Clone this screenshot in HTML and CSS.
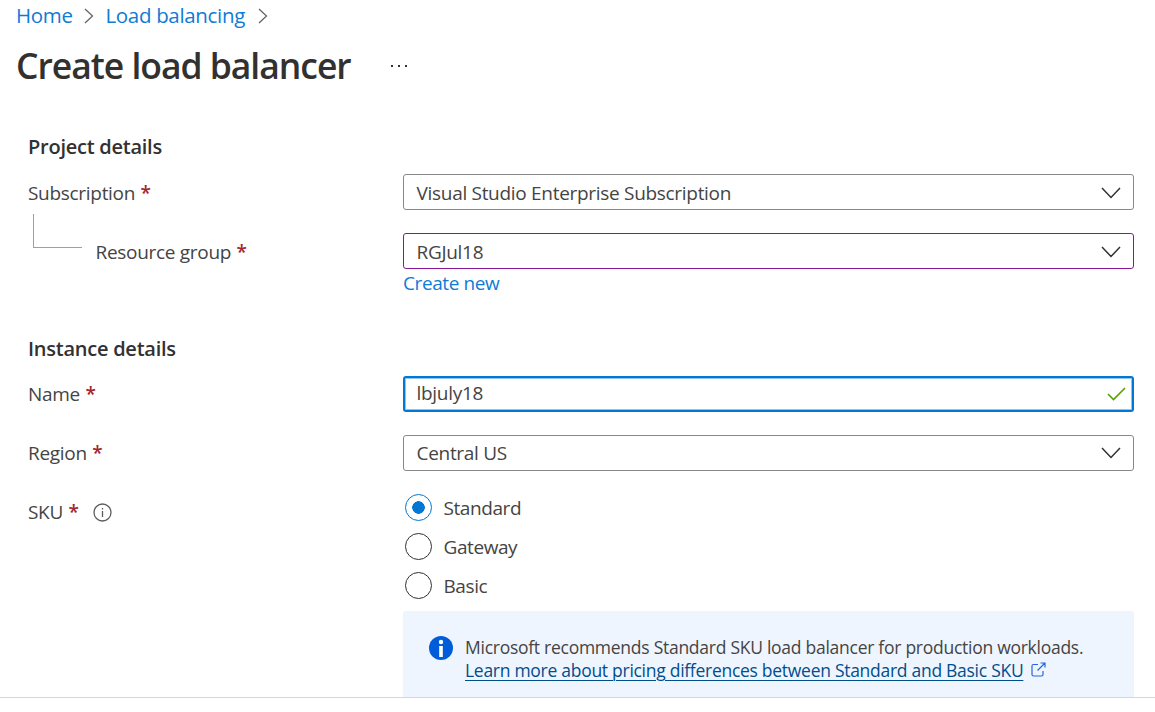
FILE: index.html
```html
<!DOCTYPE html>
<html lang="en">
<head>
<meta charset="utf-8">
<title>Create load balancer</title>
<link rel="stylesheet" href="styles.css">
</head>
<body>
<div class="blade">
  <nav class="breadcrumb">
    <a class="crumb crumb-home" href="#">Home</a>
    <svg class="crumb-sep" width="10" height="16" viewBox="0 0 10 16"><path d="M1 1l7.500 7-7.500 7"/></svg>
    <a class="crumb crumb-parent" href="#">Load balancing</a>
    <svg class="crumb-sep" width="10" height="16" viewBox="0 0 10 16"><path d="M1 1l7.500 7-7.500 7"/></svg>
  </nav>
  <header class="title-bar">
    <h1 class="title">Create load balancer</h1>
    <svg class="more" width="18" height="4" viewBox="0 0 18 4"><path d="M1 1h2v2H1zM8 1h2v2H8zM15 1h2v2h-2z"/></svg>
  </header>
  <main class="form">
    <h2 class="section-title">Project details</h2>
    <div class="row">
      <label class="label"><span>Subscription</span><span class="req">*</span></label>
      <div class="field"><span>Visual Studio Enterprise Subscription</span><svg class="chevron" width="20" height="12" viewBox="0 0 20 12"><path d="M1 1l9 9.500 9-9.500"/></svg></div>
    </div>
    <div class="row">
      <div class="label label-child"><span class="branch"></span><span>Resource group</span><span class="req">*</span></div>
      <div class="field field-edited"><span>RGJul18</span><svg class="chevron" width="20" height="12" viewBox="0 0 20 12"><path d="M1 1l9 9.500 9-9.500"/></svg></div>
    </div>
    <div class="link-row"><a class="link" href="#">Create new</a></div>
    <h2 class="section-title">Instance details</h2>
    <div class="row row-instance">
      <label class="label"><span>Name</span><span class="req">*</span></label>
      <div class="field field-focus"><span>lbjuly18</span><svg class="check" width="19" height="14" viewBox="0 0 19 14"><path d="M1 7l5.500 5.500L18 1"/></svg></div>
    </div>
    <div class="row row-instance">
      <label class="label"><span>Region</span><span class="req">*</span></label>
      <div class="field field-region"><span>Central US</span><svg class="chevron" width="20" height="12" viewBox="0 0 20 12"><path d="M1 1l9 9.500 9-9.500"/></svg></div>
    </div>
    <div class="row row-instance sku-row">
      <div class="label"><span>SKU</span><span class="req">*</span>
        <svg class="info" width="19" height="19" viewBox="0 0 19 19"><circle cx="9.500" cy="9.500" r="8.500"/><path d="M9.500 8v6M9.500 5v1.500"/></svg>
      </div>
      <div class="radios">
        <div class="radio"><span class="dot dot-on"></span><span>Standard</span></div>
        <div class="radio"><span class="dot"></span><span>Gateway</span></div>
        <div class="radio"><span class="dot"></span><span>Basic</span></div>
      </div>
    </div>
    <div class="notice">
      <svg class="notice-icon" width="24" height="24" viewBox="0 0 24 24"><circle class="disc" cx="12" cy="12" r="12"/><circle class="mark" cx="12" cy="6" r="2.200"/><path class="mark" d="M10.200 10h3.600v11h-3.600z"/></svg>
      <div class="notice-text">
        <div>Microsoft recommends Standard SKU load balancer for production workloads.</div>
        <div class="notice-line"><a class="learn" href="#">Learn more about pricing differences between Standard and Basic SKU</a>
          <svg class="external" width="15" height="15" viewBox="0 0 15 15"><path d="M7 2.500H2.500q-1.500 0-1.500 1.500v8.500q0 1.500 1.500 1.500h8q1.500 0 1.500-1.500V9M9.500 1H14v4.500M14 1L6.500 8.500"/></svg>
        </div>
      </div>
    </div>
  </main>
</div>
</body>
</html>
```
FILE: styles.css
```css
* { box-sizing: border-box; }
body { margin: 0; background: #fff; color: #454443; font: 19px/24px "Open Sans", "Noto Sans", sans-serif; letter-spacing: -0.300px; white-space: nowrap; }
a { color: #0f7bd6; text-decoration: none; }
svg { flex: none; fill: none; }
.blade { height: 712px; overflow: hidden; }
.breadcrumb { display: flex; align-items: center; height: 32px; padding-left: 16px; font-size: 20.500px; letter-spacing: -0.330px; }
.crumb { padding-bottom: 2px; }
.crumb-sep { stroke: #666; stroke-width: 1.300; }
.crumb-home { width: 56px; }
.crumb-parent { width: 140px; }
.crumb-home + .crumb-sep { margin: 0 11.500px 0 12px; }
.crumb-parent + .crumb-sep { margin-left: 12px; }
.title-bar { display: flex; align-items: center; height: 68px; padding-left: 16px; }
.title { margin: -2px 0 0; width: 335px; font-size: 35.500px; line-height: 48px; font-weight: 600; letter-spacing: -1.030px; color: #323130; }
.more { margin-left: 39px; fill: #323130; }
.form { height: 598px; padding: 34px 21px 0 28px; border-bottom: 1px solid #d6d6d6; overflow: hidden; }
.section-title { margin: 0; height: 40px; font-size: 20px; line-height: 26px; font-weight: 600; letter-spacing: -0.250px; color: #323130; }
.row { display: grid; grid-template-columns: 375px 731px; height: 59px; }
.label { display: flex; height: 36px; padding-top: 2px; align-items: center; }
.row-instance .label { padding-top: 0; }
.req { margin-left: 5.500px; color: #a4262c; font-weight: 600; }
.branch { width: 49px; height: 34px; margin: -42px 13.500px 0 5px; border-left: 1px solid #a19f9d; border-bottom: 1px solid #a19f9d; }
.field { display: flex; align-items: center; justify-content: space-between; height: 36px; padding: 1px 12.500px 0 12.500px; border: 1px solid #8a8886; border-radius: 3px; }
.field-region { padding-top: 0; }
.field-edited { border-color: #881798; }
.field-focus { border: 2px solid #0078d4; padding: 0 6.500px 2px 11.500px; box-shadow: inset 0 0 0 1px #8ec4ed; }
.field-focus .check { margin-top: 2px; }
.chevron { stroke: #323130; stroke-width: 1.500; }
.check { stroke: #57a300; stroke-width: 1.600; }
.link-row { height: 44px; margin-top: -21px; padding-left: 375px; letter-spacing: -0.400px; }
.link-row + .section-title { margin-top: 21px; }
.sku-row { height: 117px; }
.info { margin-left: 14px; stroke: #605e5c; stroke-width: 1.300; }
.radios { margin-top: -6px; letter-spacing: -0.420px; }
.radio { display: flex; align-items: center; height: 39px; gap: 11.500px; padding-left: 2px; }
.dot { width: 27px; height: 27px; border: 1px solid #323130; border-radius: 50%; }
.dot-on { border-color: #0078d4; background: radial-gradient(circle, #0078d4 6px, #fff 6.500px); }
.notice { display: flex; height: 112px; margin-left: 375px; width: 731px; padding: 25px 26px; border-radius: 3px; background: #eff5ff; }
.notice-icon .disc { fill: #015cda; }
.notice-icon .mark { fill: #fff; }
.notice-text { margin-left: 12px; font-size: 17.500px; line-height: 23px; letter-spacing: -0.265px; }
.notice-line { display: flex; align-items: center; letter-spacing: -0.280px; }
.learn { color: #004e8c; text-decoration: underline; text-decoration-thickness: 1px; text-underline-offset: 3px; }
.external { margin: -2px 0 0 7.500px; stroke: #2266e3; stroke-width: 1.200; }
```
